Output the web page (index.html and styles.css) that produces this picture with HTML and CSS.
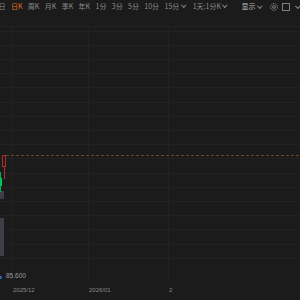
FILE: index.html
```html
<!DOCTYPE html>
<html lang="zh-CN">
<head>
  <meta charset="UTF-8" />
  <meta name="viewport" content="width=device-width, initial-scale=1.0" />
  <title>K线</title>
  <link rel="stylesheet" href="styles.css">
</head>
<body>
  <div class="toolbar">
    <span class="tab first">日</span>
    <span class="tab active">日K</span>
    <span class="tab">周K</span>
    <span class="tab">月K</span>
    <span class="tab">季K</span>
    <span class="tab">年K</span>
    <span class="tab">1分</span>
    <span class="tab">3分</span>
    <span class="tab">5分</span>
    <span class="tab">10分</span>
    <span class="tab">15分<i class="caret"></i></span>
    <span class="tab wide">1天:1分K<i class="caret"></i></span>
    <div class="tools">
      <span class="tab show">显示<i class="caret"></i></span>
      <span class="icon">
        <svg width="8" height="8" viewBox="0 0 8 8">
          <circle cx="4" cy="4" r="3.4" fill="none" stroke="#8a8a8a" stroke-width="0.9" stroke-dasharray="1.4 0.7"/>
          <circle cx="4" cy="4" r="1.4" fill="none" stroke="#8a8a8a" stroke-width="0.9"/>
        </svg>
      </span>
      <span class="icon">
        <svg width="8" height="8" viewBox="0 0 8 8">
          <rect x="0.5" y="0.5" width="7" height="7" fill="none" stroke="#8a8a8a" stroke-width="0.9"/>
        </svg>
      </span>
      <i class="caret"></i>
    </div>
  </div>

  <svg class="chart" width="300" height="255" viewBox="0 27 300 255">
    <g stroke="#222" stroke-width="1">
      <line x1="0" y1="31.5" x2="300" y2="31.5"/>
      <line x1="0" y1="45.5" x2="300" y2="45.5"/>
      <line x1="0" y1="59.5" x2="300" y2="59.5"/>
      <line x1="0" y1="73.5" x2="300" y2="73.5"/>
      <line x1="0" y1="87.5" x2="300" y2="87.5"/>
      <line x1="0" y1="102.5" x2="300" y2="102.5"/>
      <line x1="0" y1="116.5" x2="300" y2="116.5"/>
      <line x1="0" y1="130.5" x2="300" y2="130.5"/>
      <line x1="0" y1="144.5" x2="300" y2="144.5"/>
      <line x1="0" y1="158.5" x2="300" y2="158.5"/>
      <line x1="0" y1="173.5" x2="300" y2="173.5"/>
      <line x1="0" y1="187.5" x2="300" y2="187.5"/>
      <line x1="0" y1="201.5" x2="300" y2="201.5"/>
      <line x1="0" y1="215.5" x2="300" y2="215.5"/>
      <line x1="0" y1="229.5" x2="300" y2="229.5"/>
      <line x1="0" y1="244.5" x2="300" y2="244.5"/>
      <line x1="0" y1="258.5" x2="300" y2="258.5"/>
      <line x1="11.5" y1="28" x2="11.5" y2="282"/>
      <line x1="88.5" y1="28" x2="88.5" y2="282"/>
      <line x1="168.5" y1="28" x2="168.5" y2="282"/>
    </g>

    <line x1="6" y1="155.5" x2="300" y2="155.5" stroke="#7a4024" stroke-dasharray="3 2"/>

    <rect x="0" y="191" width="4" height="8" fill="#3c4046"/>
    <rect x="0" y="218" width="4" height="38" fill="#3c4046"/>

    <line x1="0.5" y1="172" x2="0.5" y2="192" stroke="#00b050"/>
    <rect x="0" y="178" width="2" height="8" fill="#00c853"/>

    <line x1="4.5" y1="166" x2="4.5" y2="179" stroke="#a83030"/>
    <rect x="2.5" y="155.5" width="3" height="11" fill="none" stroke="#a83030"/>

    <rect x="0" y="276" width="1.5" height="3" fill="#2f6fd6"/>

    <text class="price" x="6" y="277.5">85.600</text>
  </svg>

  <div class="axis">
    <span class="date" style="width: 76px">2025/12</span>
    <span class="date" style="width: 80px">2026/01</span>
    <span class="date">2</span>
  </div>
</body>
</html>
```

FILE: styles.css
```css
body {
  margin: 0;
  padding: 0;
  width: 300px;
  height: 300px;
  overflow: hidden;
  background: #1b1b1b;
  font-family: "Noto Sans CJK SC", "Liberation Sans", sans-serif;
  color: #8a8a8a;
}
.toolbar {
  height: 27px;
  display: flex;
  align-items: flex-start;
  gap: 5.4px;
  padding-top: 2.5px;
  font-size: 7px;
  white-space: nowrap;
  border-bottom: 1px solid #222;
  box-sizing: border-box;
}
.tab {
  display: flex;
  align-items: center;
  line-height: 1;
}
.tab.first {
  margin-left: -1.5px;
}
.tab.active {
  color: #e46c1c;
}
.tab.show {
  color: #b8b8b8;
}
.tab.wide {
  margin-left: 2px;
}
.caret {
  display: inline-block;
  width: 2.5px;
  height: 2.5px;
  margin-left: 2.5px;
  margin-top: -2px;
  border-right: 1px solid #8a8a8a;
  border-bottom: 1px solid #8a8a8a;
  transform: rotate(45deg);
}
.tools {
  margin-left: auto;
  display: flex;
  align-items: center;
  gap: 3.5px;
  padding-right: 1px;
}
.tools .tab {
  margin-right: 5px;
}
.icon {
  display: flex;
}
.chart {
  display: block;
}
.price {
  font-family: "Liberation Sans", sans-serif;
  font-size: 6.5px;
  fill: #9a9a9a;
}
.axis {
  height: 18px;
  display: flex;
  align-items: center;
  padding-left: 13px;
  margin-top: -1px;
}
.date {
  font-family: "Liberation Sans", sans-serif;
  font-size: 6px;
  color: #8a8a8a;
}
```
